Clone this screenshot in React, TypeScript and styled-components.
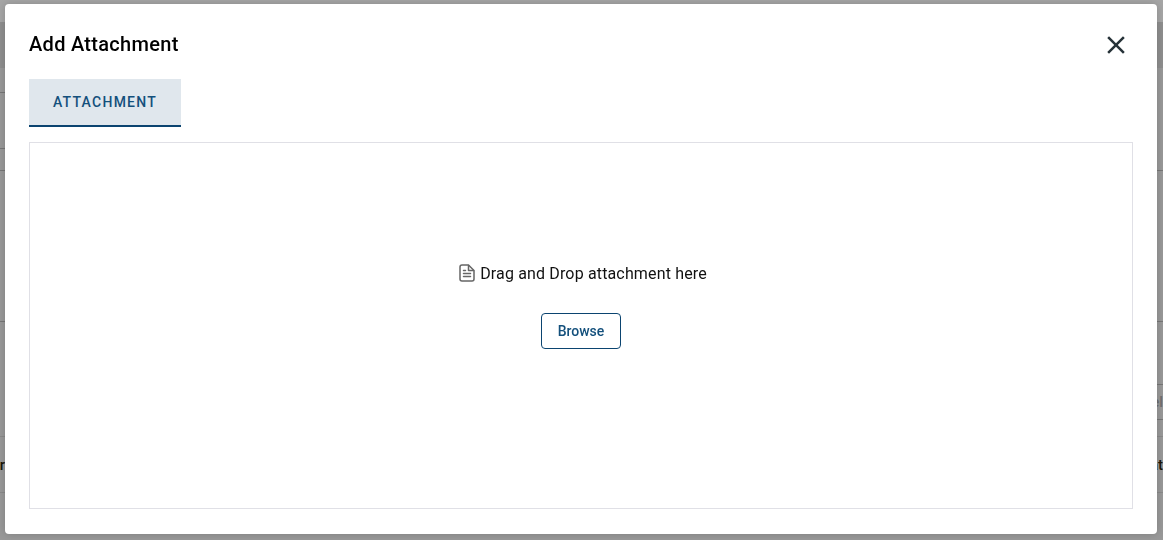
import React from 'react';
import styled, { createGlobalStyle } from 'styled-components';

const GlobalStyle = createGlobalStyle`
  html, body {
    margin: 0;
    height: 100%;
    overflow: hidden;
    font-family: Roboto, "Liberation Sans", sans-serif;
  }
`;

const Page = styled.div`
  height: 540px;
  display: flex;
  flex-direction: column;
  background: #999;
`;

const TopBand = styled.div`
  height: 22px;
  flex: none;
  background: #a6a6a6;
`;

const HeaderBand = styled.div`
  height: 46px;
  flex: none;
  background: #8f8f8f;
`;

const Columns = styled.div`
  flex: 1;
  display: flex;
  justify-content: space-between;
`;

const Side = styled.div`
  width: 12px;
  display: flex;
  flex-direction: column;
`;

const Cell = styled.div<{ $height: number; $line?: string; $end?: boolean }>`
  height: ${(p) => p.$height}px;
  flex: none;
  box-sizing: border-box;
  border-bottom: 1px solid ${(p) => p.$line ?? 'transparent'};
  display: flex;
  align-items: center;
  justify-content: ${(p) => (p.$end ? 'flex-start' : 'flex-end')};
  overflow: hidden;
  font-size: 15px;
  font-weight: 500;
`;

const CutText = styled.span<{ $muted?: boolean }>`
  color: ${(p) => (p.$muted ? '#6f6f6f' : '#1c1608')};
  white-space: nowrap;
  flex: none;
`;

const LeftCut = styled(CutText)`
  margin-right: 7px;
`;

const RightCut = styled(CutText)`
  margin-left: 5px;
`;

const Overlay = styled.div`
  position: fixed;
  left: 5px;
  top: 4px;
  width: 1152px;
  height: 530px;
`;

const Dialog = styled.div`
  box-sizing: border-box;
  height: 100%;
  padding: 0 24px 25px;
  display: flex;
  flex-direction: column;
  background: #fff;
  border-radius: 4px;
  box-shadow: 0 0 8px rgba(0, 0, 0, 0.18);
`;

const DialogHeader = styled.div`
  height: 75px;
  flex: none;
  padding-top: 4px;
  box-sizing: border-box;
  display: flex;
  align-items: center;
  justify-content: space-between;
`;

const Title = styled.h2`
  margin: 0;
  font-size: 20px;
  font-weight: 500;
  line-height: 32px;
  letter-spacing: 0.3px;
  color: #000;
`;

const CloseButton = styled.button`
  width: 30px;
  height: 30px;
  margin: 2px 2px 0 0;
  padding: 0;
  border: 0;
  background: none;
  color: #263238;
  display: flex;
`;

const Tabs = styled.div`
  display: flex;
  flex: none;
  margin-bottom: 15px;
`;

const Tab = styled.div`
  width: 152px;
  height: 48px;
  box-sizing: border-box;
  display: flex;
  align-items: center;
  justify-content: center;
  background: #e0e7ed;
  border-bottom: 2px solid #0b4470;
  color: #14507c;
  font-size: 14px;
  font-weight: 500;
  letter-spacing: 1.25px;
`;

const DropZone = styled.div`
  flex: 1;
  box-sizing: border-box;
  border: 1px solid #e0e0e6;
  display: flex;
  flex-direction: column;
  align-items: center;
  padding-top: 118px;
`;

const Hint = styled.div`
  display: flex;
  align-items: center;
  gap: 5px;
  height: 24px;
  margin-left: 4px;
  font-size: 16px;
  letter-spacing: 0.15px;
  color: #111;
`;

const HintIcon = styled.svg`
  width: 16px;
  height: 18px;
  color: #666;
`;

const BrowseButton = styled.button`
  margin-top: 28px;
  width: 80px;
  height: 36px;
  box-sizing: border-box;
  border: 1px solid #0b4470;
  border-radius: 4px;
  background: #fff;
  color: #14507c;
  font-family: inherit;
  font-size: 14px;
  font-weight: 500;
`;

export default function App() {
  return (
    <>
      <GlobalStyle />
      <Page>
        <TopBand />
        <HeaderBand />
        <Columns>
          <Side>
            <Cell $height={25} $line="#777" />
            <Cell $height={56} $line="#777" />
            <Cell $height={22} $line="#777" />
            <Cell $height={151} $line="#777" />
            <Cell $height={115} $line="#8a8a8a" />
            <Cell $height={56} $line="#8a8a8a">
              <LeftCut>r</LeftCut>
            </Cell>
          </Side>
          <Side>
            <Cell $height={103} $line="#777" />
            <Cell $height={151} $line="#777" />
            <Cell $height={63} $line="#777" />
            <Cell $height={35} $line="#777">
              <RightCut $muted>el</RightCut>
            </Cell>
            <Cell $height={17} $line="#8a8a8a" />
            <Cell $height={56} $line="#8a8a8a">
              <RightCut>at</RightCut>
            </Cell>
          </Side>
        </Columns>
      </Page>
      <Overlay>
        <Dialog>
          <DialogHeader>
            <Title>Add Attachment</Title>
            <CloseButton aria-label="Close">
              <svg viewBox="0 0 24 24" width="30" height="30" fill="currentColor">
                <path d="M19 6.41 17.59 5 12 10.59 6.41 5 5 6.41 10.59 12 5 17.59 6.41 19 12 13.41 17.59 19 19 17.59 13.41 12z" />
              </svg>
            </CloseButton>
          </DialogHeader>
          <Tabs>
            <Tab>ATTACHMENT</Tab>
          </Tabs>
          <DropZone>
            <Hint>
              <HintIcon viewBox="0 0 16 18" fill="none" stroke="currentColor" strokeWidth="1.5" strokeLinejoin="round" strokeLinecap="round">
                <path d="M3 1h6.5L15 6.5V15a2 2 0 0 1-2 2H3a2 2 0 0 1-2-2V3a2 2 0 0 1 2-2z" />
                <path d="M9.5 1.5V6.5H14.5" />
                <path d="M4.5 9.5h7M4.5 12.5h7M4.5 6.5h2" />
              </HintIcon>
              Drag and Drop attachment here
            </Hint>
            <BrowseButton>Browse</BrowseButton>
          </DropZone>
        </Dialog>
      </Overlay>
    </>
  );
}
